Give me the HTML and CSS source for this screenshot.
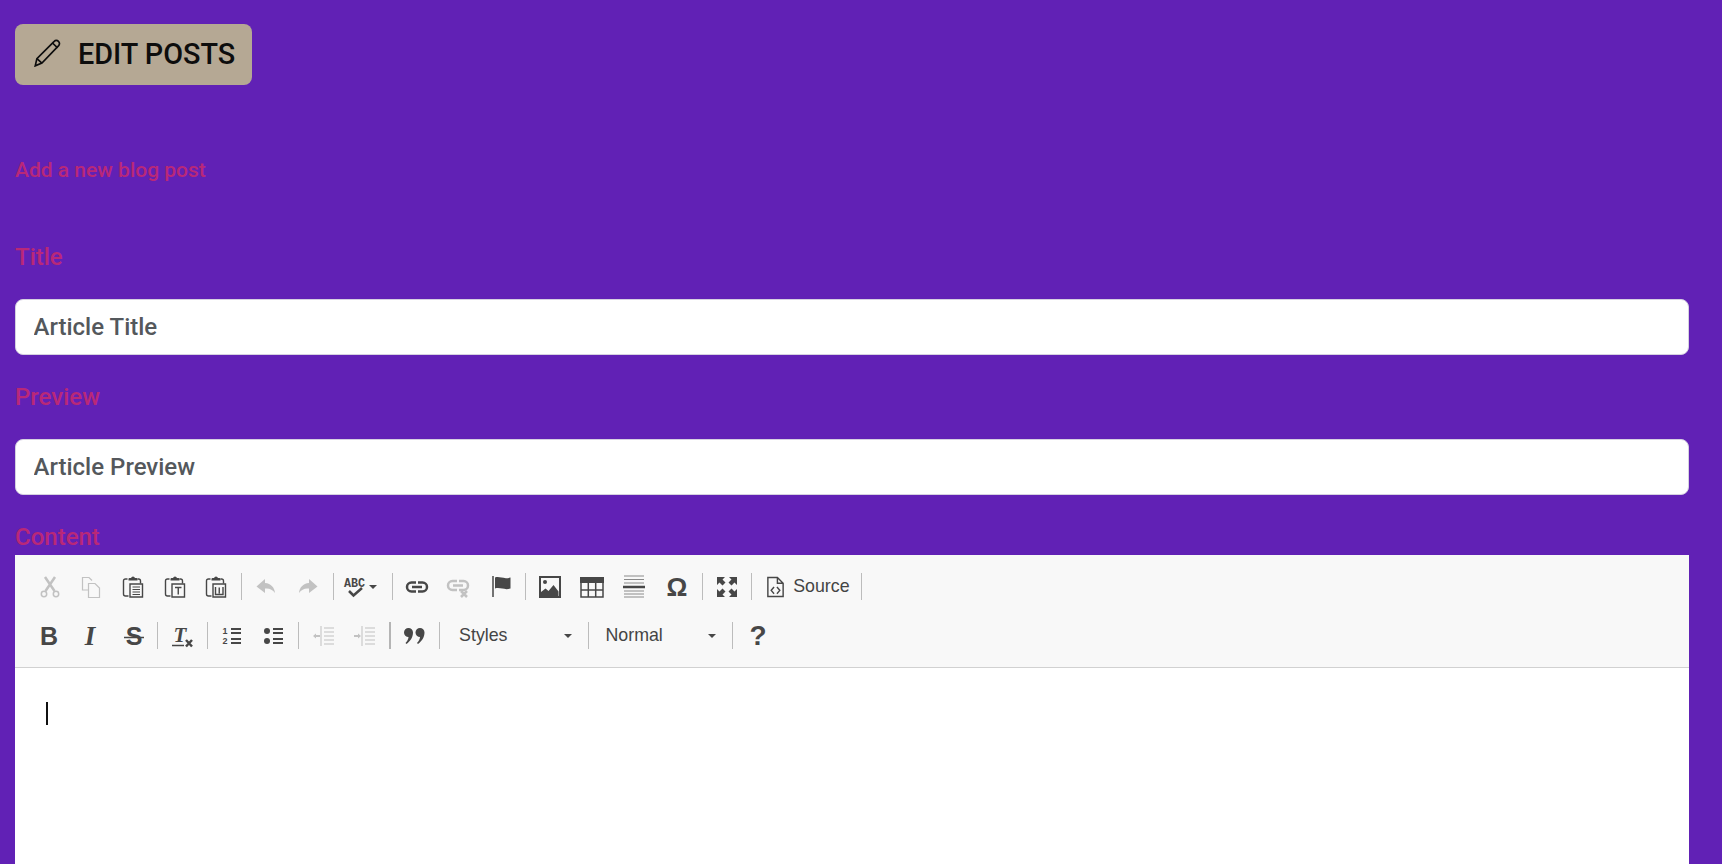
FILE: index.html
```html
<!DOCTYPE html>
<html lang="en">
<head>
<meta charset="utf-8">
<title>Add a new blog post</title>
<link rel="stylesheet" href="styles.css">
</head>
<body>
<main class="page">
  <a class="edit-btn" href="#">
    <svg class="pencil" viewBox="0 0 26 26"><path d="M2 25l1.500-6.500L19 3a2.600 2.600 0 0 1 3.800 0 2.600 2.600 0 0 1 .2 3.800L8 22.500z"/><path d="M3.500 18.500l4.500 4M17.500 4.500l4.500 4.300"/></svg>
    <span class="edit-label">EDIT POSTS</span>
  </a>
  <h1 class="subtitle">Add a new blog post</h1>
  <form class="form">
    <label class="label label-first">Title</label>
    <input class="field" type="text" value="Article Title">
    <label class="label">Preview</label>
    <input class="field" type="text" value="Article Preview">
    <label class="label label-content">Content</label>
    <div class="editor">
      <div class="toolbar">
        <div class="row">
          <span class="btn off"><svg class="ic" viewBox="0 0 22 22"><path class="s25" d="M6 1l9.500 14M16 1L6.500 15"/><circle class="s15" cx="5" cy="18" r="2.700"/><circle class="s15" cx="17" cy="18" r="2.700"/></svg></span>
          <span class="btn off"><svg class="ic" viewBox="0 0 22 22"><path class="s12" d="M8 14H2.500V1.500H9l3 3M8.500 7.500H15l4.500 4.500v9.500h-11z"/></svg></span>
          <span class="btn"><svg class="ic" viewBox="0 0 22 22"><path class="s14" d="M5.500 3H3.500Q1.500 3 1.500 5v13q0 2 2 2h3M15.500 3h1q2 0 2 2v2.500"/><path class="f" d="M6.500 4.500V3q0-1 1-1h1.500Q9.500 .5 11 .5t2 1.500h1.500q1 0 1 1v1.500z"/><path class="s14" d="M8 8h12.500v13H8z"/><path class="s12" d="M10.500 11h7.500M10.500 13.500h7.500M10.500 16h7.500M10.500 18.500h7.500"/></svg></span>
          <span class="btn"><svg class="ic" viewBox="0 0 22 22"><path class="s14" d="M5.500 3H3.500Q1.500 3 1.500 5v13q0 2 2 2h3M15.500 3h1q2 0 2 2v2.500"/><path class="f" d="M6.500 4.500V3q0-1 1-1h1.500Q9.500 .5 11 .5t2 1.500h1.500q1 0 1 1v1.500z"/><path class="s14" d="M8 8h12.500v13H8z"/><path class="s14" d="M11 11.500h6.500M14.250 11.500v7"/></svg></span>
          <span class="btn"><svg class="ic" viewBox="0 0 22 22"><path class="s14" d="M5.500 3H3.500Q1.500 3 1.500 5v13q0 2 2 2h3M15.500 3h1q2 0 2 2v2.500"/><path class="f" d="M6.500 4.500V3q0-1 1-1h1.500Q9.500 .5 11 .5t2 1.500h1.500q1 0 1 1v1.500z"/><path class="s14" d="M8 8h12.500v13H8z"/><path class="s14" d="M10.500 11v7.500h7.500V11M14.250 11.500v6"/></svg></span>
          <i class="sep"></i>
          <span class="btn off"><svg class="ic" viewBox="0 0 22 22"><path class="f" d="M10 3L1.500 10.500 10 17v-4.500c4.500-.5 7.500 1 10 4.500-.5-5.500-4-9.500-10-10z"/></svg></span>
          <span class="btn off"><svg class="ic" viewBox="0 0 22 22"><path class="f" d="M12 3l8.500 7.500L12 17v-4.500c-4.500-.5-7.500 1-10 4.500 .5-5.500 4-9.500 10-10z"/></svg></span>
          <i class="sep"></i>
          <span class="btn btn-spell"><svg class="ic" viewBox="0 0 22 22"><text class="abc" x="0" y="11" textLength="21" lengthAdjust="spacingAndGlyphs">ABC</text><path class="s25" d="M5 15l4.500 4.500L18 12"/></svg><b class="caret"></b></span>
          <i class="sep"></i>
          <span class="btn"><svg class="ic" viewBox="0 0 22 22"><path class="s25" d="M10 6.500H5.500a4.500 4.500 0 0 0 0 9H10M12 6.500h4.500a4.500 4.500 0 0 1 0 9H12M6 11h10"/></svg></span>
          <span class="btn off"><svg class="ic" viewBox="0 0 22 22"><path class="s25" d="M10 5H5.500a4.500 4.500 0 0 0 0 9H10M12 5h4.500a4.500 4.500 0 0 1 0 9H12M6 9.500h10"/><path class="s25" d="M14 15l6 6M20 15l-6 6"/></svg></span>
          <span class="btn"><svg class="ic" viewBox="0 0 22 22"><path class="s15" d="M4 0v21"/><path class="f" d="M6 1.500c5-1.500 8 2 15.500 0v11c-6 2-10-1.500-15.500 0z"/></svg></span>
          <i class="sep"></i>
          <span class="btn"><svg class="ic" viewBox="0 0 22 22"><path class="s2" d="M1 1h20v20H1z"/><circle class="f" cx="6" cy="6" r="2"/><path class="f" d="M2 20v-4l4.500-3.500 3 2.500 5-6 5 6.500V20z"/></svg></span>
          <span class="btn btn-wide"><svg class="ic" viewBox="0 0 22 22"><path class="f" d="M-1 1h24v6H-1z"/><path class="s15" d="M0 7v14h22V7M0 14h22M7.300 7v14M14.700 7v14"/></svg></span>
          <span class="btn btn-wide"><svg class="ic" viewBox="0 0 22 22"><path class="s1g" d="M1 0h20M1 3.500h20M1 7h20M1 15h20M1 18h20M1 21h20"/><path class="s25" d="M0 11h22"/></svg></span>
          <span class="btn btn-wide"><svg class="ic" viewBox="0 0 22 22"><text class="omega" x="11" y="20">Ω</text></svg></span>
          <i class="sep"></i>
          <span class="btn btn-narrow"><svg class="ic" viewBox="0 0 22 22"><path class="f" d="M1 1h8L6.500 3.500l3 3-3 3-3-3L1 9zM21 1h-8l2.500 2.500-3 3 3 3 3-3L21 9zM1 21h8l-2.500-2.500 3-3-3-3-3 3L1 13zM21 21h-8l2.500-2.500-3-3 3-3 3 3L21 13z"/></svg></span>
          <i class="sep"></i>
          <span class="btn btn-source"><svg class="ic ic-doc" viewBox="0 0 22 22"><path class="s15" d="M3 1h10l6 6v14H3zM13 1v6h6"/><path class="s15" d="M9.500 11l-3 3.500 3 3.500M12.500 11l3 3.500-3 3.500"/></svg><span class="src-label">Source</span></span>
          <i class="sep"></i>
        </div>
        <div class="row row-two">
          <span class="btn"><svg class="ic" viewBox="0 0 22 22"><text class="big bold" x="11" y="20">B</text></svg></span>
          <span class="btn"><svg class="ic" viewBox="0 0 22 22"><text class="big ital" x="11" y="20">I</text></svg></span>
          <span class="btn"><svg class="ic" viewBox="0 0 22 22"><text class="big bold" x="13" y="20">S</text><path class="s15" d="M3 12.500h20"/></svg></span>
          <i class="sep"></i>
          <span class="btn"><svg class="ic" viewBox="0 0 22 22"><text class="big ital t-small" x="9" y="16.500">T</text><path class="s15" d="M1 20.500h12"/><path class="s25" d="M15 15l6 6.500M21 15l-6 6.500"/></svg></span>
          <i class="sep"></i>
          <span class="btn"><svg class="ic" viewBox="0 0 22 22"><text class="num" x="4" y="9">1</text><text class="num" x="4" y="19">2</text><path class="s2" d="M10 4h10M10 8h10M10 14h10M10 18h10"/></svg></span>
          <span class="btn"><svg class="ic" viewBox="0 0 22 22"><circle class="f" cx="4" cy="6" r="3"/><circle class="f" cx="4" cy="16" r="3"/><path class="s2" d="M10 4h10M10 8h10M10 14h10M10 18h10"/></svg></span>
          <i class="sep"></i>
          <span class="btn off"><svg class="ic" viewBox="0 0 22 22"><path class="s1" d="M8 1v20M11 3h10M11 7h10M11 11h10M11 15h10M11 19h10"/><path class="f" d="M0 11l3-2.500V10h4v2H3v1.500z"/></svg></span>
          <span class="btn off"><svg class="ic" viewBox="0 0 22 22"><path class="s1" d="M8 1v20M11 3h10M11 7h10M11 11h10M11 15h10M11 19h10"/><path class="f" d="M7 11L4 8.500V10H0v2h4v1.500z"/></svg></span>
          <i class="sep sep-thick"></i>
          <span class="btn"><svg class="ic" viewBox="0 0 22 22"><path class="f" d="M5.500 3a4.500 4.500 0 0 1 4.500 4.500c0 5-3 9-6.500 11.500L2.500 18c1.500-1.500 3-4 3-6A4.500 4.500 0 0 1 5.500 3zM17 3a4.500 4.500 0 0 1 4.500 4.500c0 5-3 9-6.500 11.500l-1-1c1.500-1.500 3-4 3-6A4.500 4.500 0 0 1 17 3z"/></svg></span>
          <i class="sep"></i>
          <span class="combo combo-styles"><span>Styles</span><b class="caret"></b></span>
          <i class="sep"></i>
          <span class="combo combo-format"><span>Normal</span><b class="caret"></b></span>
          <i class="sep"></i>
          <span class="btn"><svg class="ic" viewBox="0 0 22 22"><text class="big bold help" x="11" y="20">?</text></svg></span>
        </div>
      </div>
      <div class="content"><i class="text-caret"></i></div>
    </div>
  </form>
</main>
</body>
</html>
```

FILE: styles.css
```css
* { box-sizing: border-box; }
html, body { margin: 0; height: 100%; overflow: hidden; }
body { background: #6121b5; font-family: Roboto, sans-serif; }
.page { padding: 24px 33px 0 15px; }

.edit-btn {
  display: inline-flex; align-items: center; height: 61px; width: 237px;
  padding-left: 18px; gap: 16px;
  background: #b5a894; color: #0d0d0d; border-radius: 8px;
  font-size: 28.800px; font-weight: 500; text-decoration: none;
}
.edit-label { margin-top: -1px; }
.pencil { width: 29px; height: 29px; margin-top: -4px; fill: none; stroke: #0d0d0d; stroke-width: 1.500; }

.subtitle { margin: 70px 0 0; font-size: 21px; line-height: 30px; font-weight: 500; color: #b92878; }

.form { display: block; }
.label { display: block; font-size: 24px; line-height: 28px; font-weight: 500; color: #b92878; margin: 28px 0 28px; }
.label-first { margin-top: 58px; }
.label-content { margin: 28px 0 4px; }
.field {
  display: block; width: 100%; height: 56px; padding: 0 17.500px;
  background: #fff; border: 1px solid #d5d0e0; border-radius: 8px;
  font: 500 24px Roboto, sans-serif; color: #54585c; outline: 0;
}

.editor { background: #fff; height: 400px; }
.toolbar { background: #f8f8f8; border-bottom: 1px solid #d1d1d1; height: 113px; padding: 18px 0 0 14px; display: flex; flex-direction: column; gap: 22px; }
.row { display: flex; align-items: center; height: 27px; color: #474747; }
.row-two { margin-left: -1px; }
.btn { flex: none; width: 41.600px; height: 27px; display: flex; align-items: center; justify-content: center; }
.btn.off { opacity: .3; }
.btn-wide { width: 42.400px; }
.btn-narrow { width: 40.600px; }
.btn-spell { width: 50.600px; justify-content: flex-start; padding-left: 7px; gap: 3px; }
.btn-source { width: 102px; justify-content: flex-start; padding-left: 10px; gap: 7px; }
.sep { flex: none; width: 1px; height: 27px; margin: 0 3.400px 0 4px; background: #bcbcbc; }
.sep-thick { width: 2px; margin: 0 1.800px 0 3.400px; background: #b5b5b5; }
.ic { width: 22px; height: 22px; flex: none; overflow: visible; fill: none; stroke: currentColor; }
.ic-doc { width: 21px; }
.f { fill: currentColor; stroke: none; }
.s1 { stroke-width: 1; }
.s12 { stroke-width: 1.200; }
.s14 { stroke-width: 1.400; }
.s15 { stroke-width: 1.500; }
.s2 { stroke-width: 2; }
.s25 { stroke-width: 2.500; }
.s1g { stroke-width: 1.200; stroke: #8a8a8a; }
.ic text { fill: currentColor; stroke: none; text-anchor: middle; }
.ic .abc { font: 700 13px "Liberation Mono", monospace; text-anchor: start; }
.ic .omega { font: 700 26px "Liberation Sans", sans-serif; }
.ic .big { font-size: 25px; }
.ic .bold { font-family: "Liberation Sans", sans-serif; font-weight: 700; }
.ic .ital { font-family: "Liberation Serif", serif; font-weight: 700; font-style: italic; font-size: 27px; }
.ic .t-small { font-size: 21px; }
.ic .help { font-size: 28px; }
.ic .num { font: 700 9px "Liberation Sans", sans-serif; }
.caret { display: block; flex: none; width: 0; height: 0; border: 4px solid transparent; border-top-color: #474747; border-bottom-width: 0; }
.src-label, .combo { font: 17.800px "Liberation Sans", sans-serif; color: #444; }
.combo { flex: none; height: 27px; display: flex; align-items: center; justify-content: space-between; }
.combo-styles { width: 141px; padding: 0 12px 0 16px; }
.combo-format { width: 136px; padding: 0 12px 0 13px; }

.content { padding: 34px 0 0 31px; }
.text-caret { display: block; width: 2px; height: 23px; background: #111; }
```
